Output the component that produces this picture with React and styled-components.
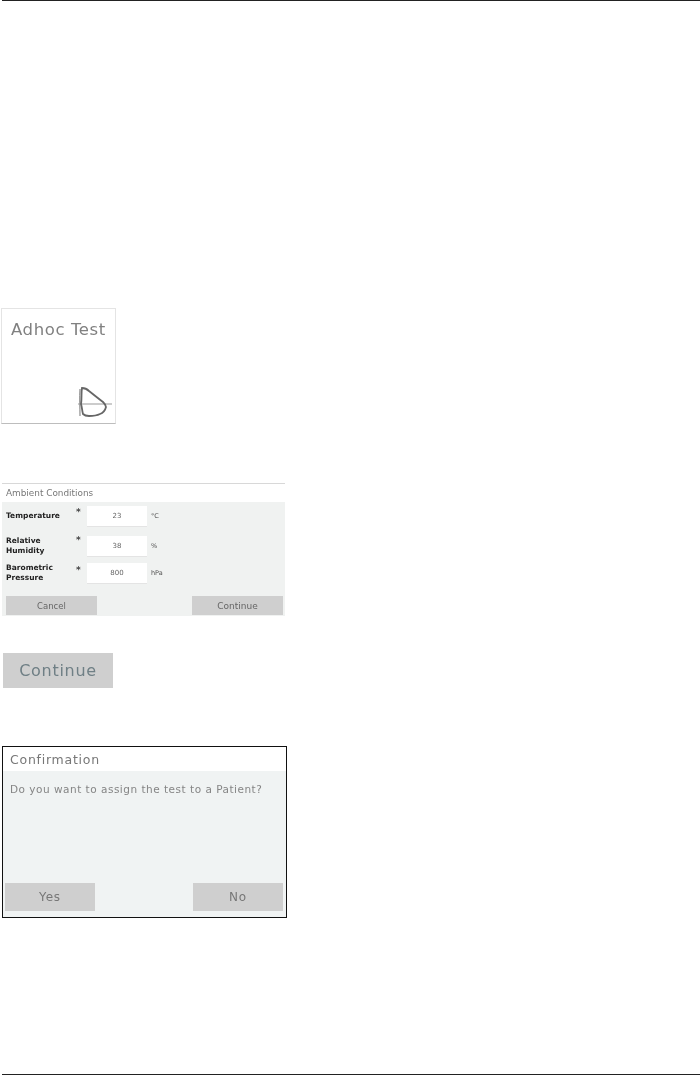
import React from "react";
import styled, { createGlobalStyle } from "styled-components";

const Global = createGlobalStyle`
  html, body {
    margin: 0;
    padding: 0;
    background: #fff;
  }
`;

const Page = styled.div`
  width: 700px;
  height: 1075px;
  box-sizing: border-box;
  display: flex;
  flex-direction: column;
  align-items: flex-start;
  overflow: hidden;
  font-family: "DejaVu Sans", sans-serif;
`;

const Rule = styled.div`
  align-self: stretch;
  height: 1px;
  margin-left: 2px;
  margin-top: ${(p) => p.$top || 0}px;
  background: #222;
`;

const Tile = styled.div`
  width: 115px;
  height: 116px;
  box-sizing: border-box;
  margin: 307px 0 0 1px;
  padding: 11px 0 0 9px;
  display: flex;
  flex-direction: column;
  justify-content: space-between;
  background: #fff;
  border: 1px solid #e4e4e4;
  border-bottom-color: #bdbdbd;
  filter: blur(0.6px);
`;

const TileTitle = styled.div`
  font-size: 16.5px;
  letter-spacing: 0.6px;
  color: #808080;
`;

const TileIcon = styled.svg`
  align-self: flex-end;
  margin: 0 3px 6px 0;
`;

const AmbientPanel = styled.div`
  width: 283px;
  height: 133px;
  margin: 59px 0 0 2px;
  display: flex;
  flex-direction: column;
  background: #f0f2f1;
  border-top: 1px solid #d8d8d8;
  box-sizing: border-box;
  filter: blur(0.6px);
`;

const PanelHeader = styled.div`
  flex: none;
  height: ${(p) => p.$height}px;
  box-sizing: border-box;
  padding-left: ${(p) => p.$pad}px;
  display: flex;
  align-items: center;
  background: #fff;
  font-size: ${(p) => p.$size}px;
  letter-spacing: ${(p) => p.$spacing || 0}px;
  color: #777;
`;

const Fields = styled.div`
  flex: 1;
  display: flex;
  flex-direction: column;
  padding: 4px 0 0 4px;
`;

const Field = styled.div`
  display: grid;
  grid-template-columns: 70px 11px 60px auto;
  align-items: center;
  height: ${(p) => p.$height}px;
  margin-bottom: ${(p) => p.$gap}px;
`;

const FieldLabel = styled.div`
  width: 62px;
  font-size: 7.5px;
  line-height: 10px;
  font-weight: 700;
  color: #222;
`;

const Star = styled.div`
  font-size: 9px;
  line-height: 8px;
  font-weight: 700;
  color: #444;
  align-self: start;
  margin-top: ${(p) => p.$top}px;
`;

const ValueBox = styled.div`
  height: 100%;
  display: flex;
  align-items: center;
  justify-content: center;
  background: #fff;
  border-bottom: 1px solid #e4e4e4;
  font-size: 7px;
  color: #666;
`;

const Unit = styled.div`
  padding-left: 4px;
  font-size: 6.5px;
  color: #555;
`;

const Actions = styled.div`
  display: flex;
  justify-content: space-between;
  padding: ${(p) => p.$pad};
`;

const Btn = styled.div`
  width: ${(p) => p.$width}px;
  height: ${(p) => p.$height}px;
  display: flex;
  align-items: center;
  justify-content: center;
  background: #cfcfcf;
  font-size: ${(p) => p.$size}px;
  letter-spacing: ${(p) => p.$spacing || 0}px;
  color: ${(p) => p.$color || "#666"};
`;

const BigContinue = styled(Btn)`
  margin: 37px 0 0 3px;
  filter: blur(0.6px);
`;

const ConfirmDialog = styled.div`
  width: 285px;
  height: 172px;
  box-sizing: border-box;
  margin: 58px 0 0 2px;
  background: #f0f3f3;
  border: 1px solid #111;
`;

const ConfirmInner = styled.div`
  height: 100%;
  display: flex;
  flex-direction: column;
  filter: blur(0.5px);
`;

const ConfirmBody = styled.div`
  flex: 1;
  padding: 12px 0 0 7px;
  font-size: 10.5px;
  letter-spacing: 0.5px;
  color: #858585;
`;

const fields = [
  { label: "Temperature", value: "23", unit: "°C", height: 20, gap: 10, star: 2 },
  { label: "Relative Humidity", value: "38", unit: "%", height: 18, gap: 9, star: 0 },
  { label: "Barometric Pressure", value: "800", unit: "hPa", height: 20, gap: 0, star: 3 },
];

function LungIcon() {
  return (
    <TileIcon width="36" height="32" viewBox="0 0 36 32" fill="none">
      <path d="M4 4 C3.5 12 4 22 4 31" stroke="#777" strokeWidth="1" />
      <path d="M2 19 H36" stroke="#999" strokeWidth="1" />
      <path
        d="M6 3 C9 3 11 4 13 6 C18 10 23 14 27 17 C29 19 30 20 30 22 C29 26 27 28 24 29 C20 31 16 31 13 31 C10 31 8 30 7 29 C6 25 6 22 5 19 C6 13 5 8 6 3 Z"
        stroke="#666"
        strokeWidth="1.8"
      />
    </TileIcon>
  );
}

export default function App() {
  return (
    <Page>
      <Global />
      <Rule />
      <Tile>
        <TileTitle>Adhoc Test</TileTitle>
        <LungIcon />
      </Tile>
      <AmbientPanel>
        <PanelHeader $height={18} $pad={4} $size={8.9}>
          Ambient Conditions
        </PanelHeader>
        <Fields>
          {fields.map((f) => (
            <Field key={f.label} $height={f.height} $gap={f.gap}>
              <FieldLabel>{f.label}</FieldLabel>
              <Star $top={f.star}>*</Star>
              <ValueBox>{f.value}</ValueBox>
              <Unit>{f.unit}</Unit>
            </Field>
          ))}
        </Fields>
        <Actions $pad="0 2px 1px 4px">
          <Btn $width={91} $height={19} $size={8.5}>
            Cancel
          </Btn>
          <Btn $width={91} $height={19} $size={9}>
            Continue
          </Btn>
        </Actions>
      </AmbientPanel>
      <BigContinue $width={110} $height={35} $size={16} $spacing={0.7} $color="#6f7f85">
        Continue
      </BigContinue>
      <ConfirmDialog>
        <ConfirmInner>
          <PanelHeader $height={24} $pad={7} $size={12.5} $spacing={0.75}>
            Confirmation
          </PanelHeader>
          <ConfirmBody>Do you want to assign the test to a Patient?</ConfirmBody>
          <Actions $pad="0 3px 6px 2px">
            <Btn $width={90} $height={28} $size={12} $spacing={0.8} $color="#777">
              Yes
            </Btn>
            <Btn $width={90} $height={28} $size={12} $spacing={0.8} $color="#777">
              No
            </Btn>
          </Actions>
        </ConfirmInner>
      </ConfirmDialog>
      <Rule $top={156} />
    </Page>
  );
}
